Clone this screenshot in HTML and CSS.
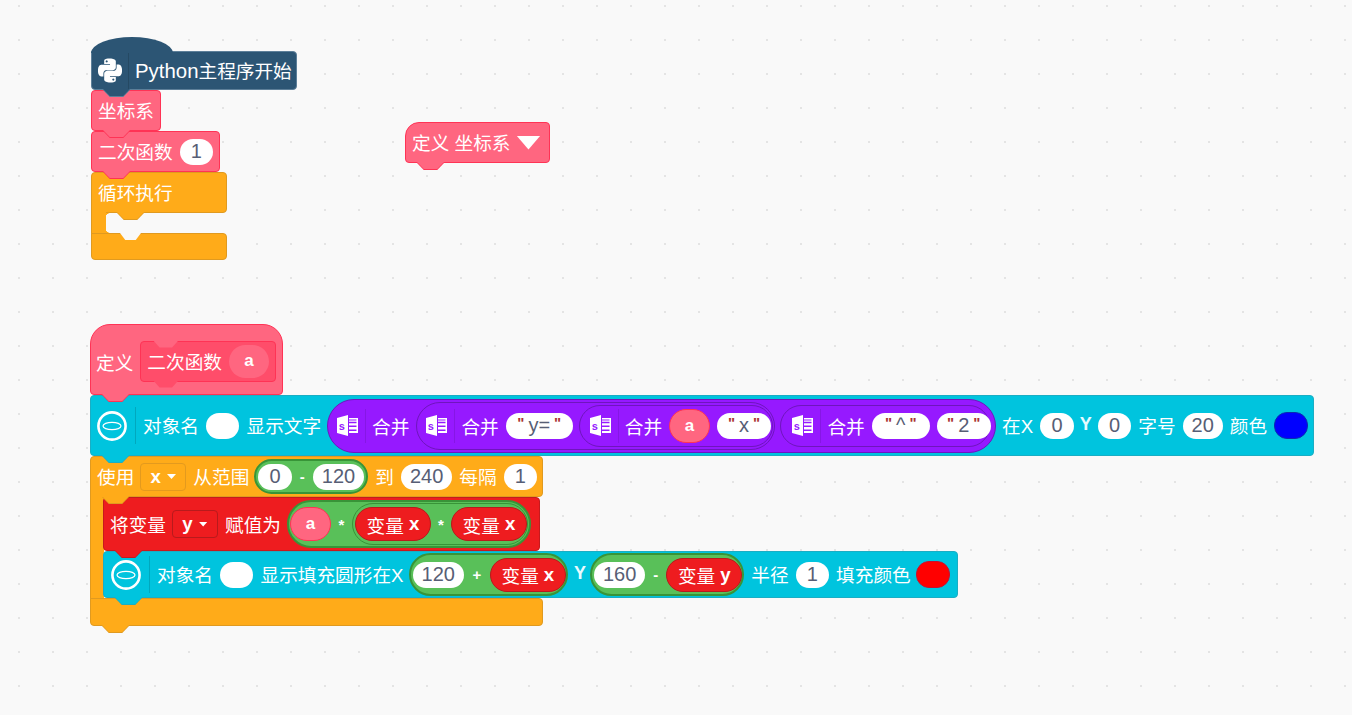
FILE: index.html
```html
<!DOCTYPE html>
<html lang="zh-CN">
<head>
    <meta charset="UTF-8">
    <meta name="viewport" content="width=device-width, initial-scale=1.0">
    <title>Python主程序</title>
    <link rel="stylesheet" href="styles.css">
</head>
<body>
    <svg class="defs" width="0" height="0">
        <defs>
            <symbol id="i-python" viewBox="0 0 24 24">
                <path fill="#fff" d="M14.25.18l.9.2.73.26.59.3.45.32.34.34.25.34.16.33.1.3.04.26.02.2-.01.13V8.5l-.05.63-.13.55-.21.46-.26.38-.3.31-.33.25-.35.19-.35.14-.33.1-.3.07-.26.04-.21.02H8.77l-.69.05-.59.14-.5.22-.41.27-.33.32-.27.35-.2.36-.15.37-.1.35-.07.32-.04.27-.02.21v3.06H3.17l-.21-.03-.28-.07-.32-.12-.35-.18-.36-.26-.36-.36-.35-.46-.32-.59-.28-.73-.21-.88-.14-1.05-.05-1.23.06-1.22.16-1.04.24-.87.32-.71.36-.57.4-.44.42-.33.42-.24.4-.16.36-.1.32-.05.24-.01h.16l.06.01h8.16v-.83H6.18l-.01-2.75-.02-.37.05-.34.11-.31.17-.28.25-.26.31-.23.38-.2.44-.18.51-.15.58-.12.64-.1.71-.06.77-.04.84-.02 1.27.05zm-6.3 1.98l-.23.33-.08.41.08.41.23.34.33.22.41.09.41-.09.33-.22.23-.34.08-.41-.08-.41-.23-.33-.33-.22-.41-.09-.41.09zm13.09 3.95l.28.06.32.12.35.18.36.27.36.35.35.47.32.59.28.73.21.88.14 1.04.05 1.23-.06 1.23-.16 1.04-.24.86-.32.71-.36.57-.4.45-.42.33-.42.24-.4.16-.36.09-.32.05-.24.02-.16-.01h-8.22v.82h5.84l.01 2.76.02.36-.05.34-.11.31-.17.29-.25.25-.31.24-.38.2-.44.17-.51.15-.58.13-.64.09-.71.07-.77.04-.84.01-1.27-.04-1.07-.14-.9-.2-.73-.25-.59-.3-.45-.33-.34-.34-.25-.34-.16-.33-.1-.3-.04-.25-.02-.2.01-.13v-5.34l.05-.64.13-.54.21-.46.26-.38.3-.32.33-.24.35-.2.35-.14.33-.1.3-.06.26-.04.21-.02.13-.01h5.84l.69-.05.59-.14.5-.21.41-.28.33-.32.27-.35.2-.36.15-.36.1-.35.07-.32.04-.28.02-.21V6.07h2.09l.14.01zm-6.47 14.25l-.23.33-.08.41.08.41.23.33.33.23.41.08.41-.08.33-.23.23-.33.08-.41-.08-.41-.23-.33-.33-.23-.41-.08-.41.08z"/>
            </symbol>
            <symbol id="i-oled" viewBox="0 0 30 30">
                <circle cx="15" cy="15" r="13.6" fill="none" stroke="#fff" stroke-width="2.6"/>
                <ellipse cx="15" cy="15" rx="9" ry="3.7" fill="none" stroke="#fff" stroke-width="1.2"/>
            </symbol>
            <symbol id="i-str" viewBox="0 0 21 21">
                <path fill="#fff" d="M0 3 L11 0 V21 L0 18 Z"/>
                <path fill="#fff" d="M12 3 H21 V18 H12 V16 H19.5 V14.6 H12 V12 H19.5 V10.6 H12 V8.2 H19.5 V6.8 H12 V5.4 H19.5 V4.4 H12 Z"/>
                <text x="1.8" y="14.6" font-family="Liberation Sans" font-size="11" font-weight="700" fill="#9619ff">s</text>
            </symbol>
        </defs>
    </svg>

    <div class="workspace">
        <!-- 主程序 -->
        <div class="stack stack-main">
            <div class="block python h-39">
                <span class="hat"></span>
                <svg class="ico-python"><use href="#i-python"/></svg>
                <span class="sep"></span>
                <span><span class="latin">Python</span>主程序开始</span>
            </div>
            <div class="block pink h-41">坐标系</div>
            <div class="block pink h-41">二次函数 <span class="num">1</span></div>
            <div class="block orange h-41 w-136 c-head deep-notch">循环执行</div>
            <div class="mouth mouth-empty"></div>
            <div class="block orange foot w-136 c-foot socket"></div>
        </div>

        <!-- 定义 下拉 -->
        <div class="stack stack-define">
            <div class="block pink h-41 define-head">定义 坐标系 <span class="tri"></span></div>
        </div>

        <!-- 定义 二次函数 -->
        <div class="stack stack-func">
            <div class="block pink func-head">
                定义
                <div class="proto">二次函数 <span class="param">a</span></div>
            </div>
            <div class="block cyan row-text">
                <svg class="ico-oled"><use href="#i-oled"/></svg>
                <span class="sep"></span>
                对象名
                <span class="num"></span>
                显示文字
                <div class="op purple op-main">
                    <svg class="ico-str"><use href="#i-str"/></svg>
                    <span class="sep sep-short"></span>
                    合并
                    <div class="op purple op-a">
                        <svg class="ico-str"><use href="#i-str"/></svg>
                        <span class="sep sep-short"></span>
                        合并
                        <span class="num str str-67"><b>"</b>y=<b>"</b></span>
                        <div class="op purple op-b">
                            <svg class="ico-str"><use href="#i-str"/></svg>
                            <span class="sep sep-short"></span>
                            合并
                            <span class="var-a">a</span>
                            <span class="num str str-54"><b>"</b>x<b>"</b></span>
                        </div>
                    </div>
                    <div class="op purple op-c">
                        <svg class="ico-str"><use href="#i-str"/></svg>
                        <span class="sep sep-short"></span>
                        合并
                        <span class="num str str-58"><b>"</b>^<b>"</b></span>
                        <span class="num str str-54"><b>"</b>2<b>"</b></span>
                    </div>
                </div>
                在X
                <span class="num">0</span>
                <span class="axis">Y</span>
                <span class="num">0</span>
                字号
                <span class="num">20</span>
                颜色
                <span class="swatch blue"></span>
            </div>
            <div class="block orange h-41 w-453 c-head">
                使用
                <span class="drop drop-orange"><i>x</i><em></em></span>
                从范围
                <div class="op green op-range">
                    <span class="num">0</span>
                    <span class="sign">-</span>
                    <span class="num">120</span>
                </div>
                到
                <span class="num">240</span>
                每隔
                <span class="num">1</span>
            </div>
            <div class="mouth">
                <div class="block red row-assign">
                    将变量
                    <span class="drop drop-red"><i>y</i><em></em></span>
                    赋值为
                    <div class="op green op-assign">
                        <span class="var-a">a</span>
                        <span class="sign">*</span>
                        <div class="op green op-mul">
                            <span class="var">变量 <i>x</i></span>
                            <span class="sign">*</span>
                            <span class="var">变量 <i>x</i></span>
                        </div>
                    </div>
                </div>
                <div class="block cyan row-circle">
                    <svg class="ico-oled"><use href="#i-oled"/></svg>
                    <span class="sep"></span>
                    对象名
                    <span class="num"></span>
                    显示填充圆形在X
                    <div class="op green op-sum">
                        <span class="num">120</span>
                        <span class="sign plus">+</span>
                        <span class="var">变量 <i>x</i></span>
                    </div>
                    <span class="axis">Y</span>
                    <div class="op green op-sum">
                        <span class="num">160</span>
                        <span class="sign">-</span>
                        <span class="var">变量 <i>y</i></span>
                    </div>
                    半径
                    <span class="num">1</span>
                    填充颜色
                    <span class="swatch redfill"></span>
                </div>
            </div>
            <div class="block orange foot w-453 c-foot"></div>
        </div>
    </div>
</body>
</html>
```

FILE: styles.css
```css
* {
    box-sizing: border-box;
}
html, body {
    margin: 0;
    padding: 0;
}
.defs {
    position: absolute;
}
.workspace {
    position: relative;
    width: 1352px;
    height: 715px;
    overflow: hidden;
    background-color: #f9f9f9;
    background-image: radial-gradient(circle, #e4e4e4 0.8px, transparent 1.2px);
    background-size: 34px 34px;
    background-position: 2px -11px;
    font-family: "Liberation Sans", "Noto Sans CJK SC", sans-serif;
    font-size: 18.67px;
    color: #fff;
}

/* 积木堆 */
.stack {
    position: absolute;
    display: flex;
    flex-direction: column;
    align-items: flex-start;
}
.stack-main {
    left: 91px;
    top: 51px;
}
.stack-define {
    left: 405px;
    top: 122px;
}
.stack-func {
    left: 90px;
    top: 324px;
}

/* 积木 */
.block {
    position: relative;
    display: flex;
    align-items: center;
    gap: 7px;
    flex-shrink: 0;
    padding: 0 6px 2px;
    border: 1px solid var(--edge);
    border-radius: 4px;
    background: var(--fill);
    white-space: nowrap;
}
.block::before,
.block::after {
    content: "";
    position: absolute;
    left: 11px;
    top: 100%;
    width: 27px;
    height: 7px;
    clip-path: polygon(0 0, 100% 0, 75% 100%, 25% 100%);
    z-index: 3;
}
.block::before {
    margin-top: 1px;
    background: var(--edge);
}
.block::after {
    background: var(--fill);
}
.python {
    --fill: #2c5574;
    --edge: #5d7f99;
    gap: 6px;
    padding-right: 4px;
    border-radius: 0 4px 4px 4px;
}
.pink {
    --fill: #ff6680;
    --edge: #ff3355;
}
.orange {
    --fill: #ffab19;
    --edge: #e09a20;
}
.cyan {
    --fill: #00c4de;
    --edge: #1aaec4;
}
.red {
    --fill: #ee1c1f;
    --edge: #c61a1d;
}
.h-39 {
    height: 39px;
}
.h-41 {
    height: 41px;
}
.w-136 {
    width: 136px;
}
.w-453 {
    width: 453px;
}
.hat {
    position: absolute;
    left: -1px;
    top: -15px;
    width: 82px;
    height: 16px;
    border-radius: 50% 50% 0 0 / 100% 100% 0 0;
    background: #2c5574;
}
.latin {
    font-size: 20.4px;
}
.ico-python {
    width: 24px;
    height: 25px;
    flex-shrink: 0;
    margin-bottom: -2px;
}
.ico-oled {
    width: 30px;
    height: 30px;
    flex-shrink: 0;
    margin-bottom: -2px;
}
.ico-str {
    width: 21px;
    height: 21px;
    flex-shrink: 0;
}
.sep {
    width: 1px;
    height: 37px;
    flex-shrink: 0;
    margin: 0 0 -2px 1px;
    background: rgba(0, 0, 0, 0.14);
}
.python .sep {
    margin-left: 0;
}
.sep-short {
    height: 34px;
    margin: 0 -1px 0 0;
    background: rgba(0, 0, 0, 0.1);
}

/* C 形积木 */
.mouth {
    position: relative;
    display: flex;
    flex-direction: column;
    align-items: flex-start;
    border-left: 13px solid #ffab19;
}
.mouth::before {
    content: "";
    position: absolute;
    left: -13px;
    top: -1px;
    bottom: -1px;
    width: 13px;
    border-left: 1px solid #e09a20;
    background: #ffab19;
}
.mouth-empty {
    width: 30px;
    height: 20px;
    border-left-width: 14px;
    background:
        radial-gradient(circle at 100% 100%, transparent 4.5px, #ffab19 5px) 0 0 / 5px 5px no-repeat,
        radial-gradient(circle at 100% 0, transparent 4.5px, #ffab19 5px) 0 100% / 5px 5px no-repeat;
}
.mouth-empty::before {
    left: -14px;
    width: 14px;
}
.c-head {
    border-bottom-left-radius: 0;
}
.c-foot {
    border-top-left-radius: 0;
}
.foot {
    height: 28px;
}
.socket {
    height: 27px;
}
.deep-notch::before,
.deep-notch::after {
    left: 25px;
}
.socket::before {
    display: none;
}
.socket::after {
    top: -1px;
    left: 28px;
    width: 21px;
    background: #f9f9f9;
}

/* 定义 */
.define-head {
    width: 145px;
    border-radius: 14px 4px 4px 4px;
}
.tri {
    width: 24px;
    height: 14px;
    margin: 2px 0 0 -1px;
    background: #fff;
    clip-path: polygon(0 0, 100% 0, 50% 100%);
}
.func-head {
    width: 193px;
    height: 71px;
    border-radius: 20px 20px 4px 4px;
    padding: 3px 5px 0;
}
.proto {
    position: relative;
    display: flex;
    align-items: center;
    gap: 7px;
    width: 136px;
    height: 41px;
    padding: 0 0 2px 6px;
    border: 1px solid #ff3355;
    border-radius: 4px;
    background: #ff4d6a;
}
.proto::before,
.proto::after {
    content: "";
    position: absolute;
    left: 12px;
    width: 25px;
    height: 7px;
    clip-path: polygon(0 0, 100% 0, 75% 100%, 25% 100%);
}
.proto::before {
    top: -1px;
    background: #ff6680;
}
.proto::after {
    top: 100%;
    background: #ff4d6a;
}
.param {
    display: flex;
    align-items: center;
    justify-content: center;
    width: 40px;
    height: 33px;
    margin-bottom: -2px;
    border-radius: 17px;
    background: #ff6680;
    font-size: 17px;
    font-weight: 700;
}

/* 圆角字段 */
.num {
    display: flex;
    align-items: center;
    justify-content: center;
    flex-shrink: 0;
    min-width: 33.5px;
    height: 26px;
    margin-bottom: -2px;
    padding: 0 9px;
    border-radius: 13px;
    background: #fff;
    color: #575e75;
    font-size: 20px;
}
.str {
    gap: 4px;
    padding: 0;
}
.str-67 {
    width: 67px;
}
.str-58 {
    width: 58px;
}
.str-54 {
    width: 54px;
}
.str b {
    margin-top: -7px;
    font-size: 15px;
    font-weight: 700;
    color: #a33;
}
.swatch {
    flex-shrink: 0;
    width: 34px;
    height: 27px;
    margin-bottom: -2px;
    border-radius: 13px;
}
.blue {
    background: #0000ff;
    border: 1px solid #0a2bb0;
}
.redfill {
    margin-left: -2px;
    background: #ff0000;
    border: 1px solid #c80f2e;
}
.drop {
    display: flex;
    align-items: center;
    justify-content: center;
    flex-shrink: 0;
    gap: 6px;
    width: 46px;
    height: 28px;
    margin: 0 0 -2px -1px;
    border-radius: 4px;
}
.drop i {
    font-style: normal;
    font-weight: 700;
}
.drop em {
    width: 9px;
    height: 5px;
    background: #fff;
    clip-path: polygon(0 0, 100% 0, 50% 100%);
}
.drop-orange {
    border: 1px solid #e39a1e;
}
.drop-red {
    border: 1px solid #b81a1c;
    background: #ee1c1f;
}

/* 运算积木 */
.op {
    display: flex;
    align-items: center;
    gap: 7px;
    flex-shrink: 0;
    border: 1px solid var(--edge);
    border-radius: 999px;
    background: var(--fill);
}
.block > .op {
    margin-bottom: -2px;
}
.op .num,
.op .sign,
.op .var,
.op .var-a {
    margin-bottom: 0;
}
.purple {
    --fill: #9619ff;
    --edge: #6f15bd;
}
.green {
    --fill: #59c059;
    --edge: #389438;
}
.block > .op-main {
    width: 669px;
    height: 54px;
    margin: 0 -1px -2px -1px;
    padding-left: 9px;
}
.op-a {
    width: 359px;
    height: 48px;
    padding-left: 9px;
}
.op-b {
    width: 194px;
    height: 42px;
    margin-left: -1px;
    padding-left: 10px;
}
.op-c {
    width: 210px;
    height: 42px;
    margin-left: -2px;
    padding-left: 11px;
}
.block > .op-range {
    width: 114px;
    height: 35px;
    margin-left: -2px;
    padding: 0 2px;
    border-width: 2px;
}
.block > .op-assign {
    width: 244px;
    height: 48px;
    margin-left: -1px;
    padding: 0 1px;
    border-width: 2px;
}
.op-mul {
    width: 176px;
    height: 42px;
    gap: 6.5px;
    padding: 0 2px;
}
.block > .op-sum {
    height: 43px;
    margin-left: -2px;
    padding: 0 0 0 2px;
    border-width: 2px;
}
.sign {
    flex-shrink: 0;
    width: 7px;
    text-align: center;
    font-weight: 700;
    font-size: 15px;
}
.plus {
    width: 12px;
}
.axis {
    margin: 0 -1px;
    font-weight: 700;
    font-size: 18px;
    color: #e8fbff;
}
.var,
.var-a {
    display: flex;
    align-items: center;
    justify-content: center;
    flex-shrink: 0;
    height: 34px;
    border-radius: 17px;
}
.var {
    width: 76px;
    gap: 5px;
    background: #ee1c1f;
    border: 1px solid #b81a1c;
}
.var i {
    font-style: normal;
    font-weight: 700;
}
.var-a {
    width: 41px;
    background: #ff6680;
    border: 1px solid #ff3355;
    font-size: 17px;
    font-weight: 700;
}

/* 语句行 */
.row-text {
    width: 1224px;
    height: 61px;
}
.row-assign {
    width: 437px;
    height: 54px;
}
.row-circle {
    width: 855px;
    height: 47px;
    padding: 0 7px 2px;
}
```
